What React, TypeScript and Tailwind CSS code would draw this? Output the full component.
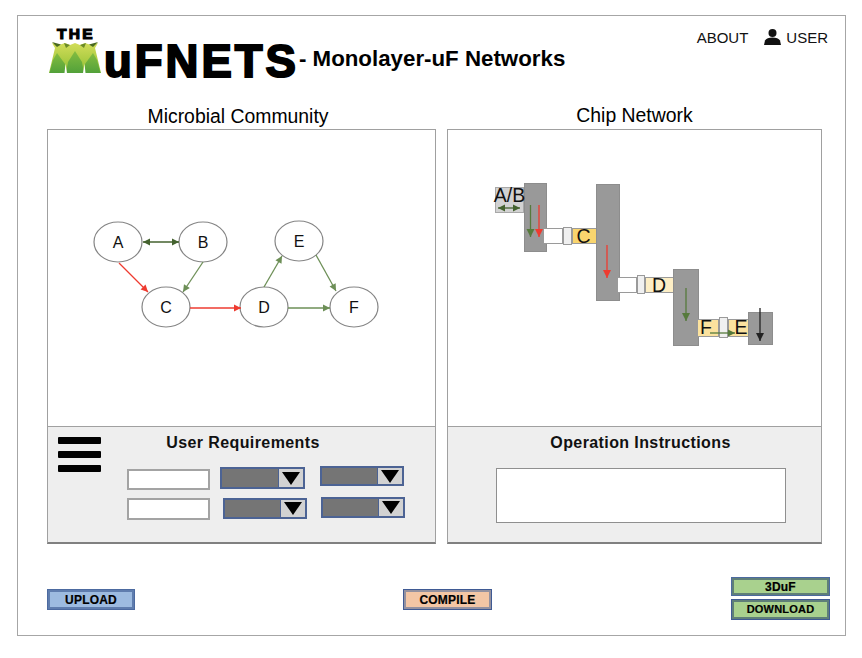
import React from "react";

function Arrow({ x1, y1, x2, y2, color, both, w = 1.3, s = 7 }: { x1: number; y1: number; x2: number; y2: number; color: string; both?: boolean; w?: number; s?: number }) {
  const a = Math.atan2(y2 - y1, x2 - x1);
  const head = (x: number, y: number, t: number) => {
    const b = s * 0.5;
    const p = [
      [x, y],
      [x - s * Math.cos(t) - b * Math.sin(t), y - s * Math.sin(t) + b * Math.cos(t)],
      [x - s * Math.cos(t) + b * Math.sin(t), y - s * Math.sin(t) - b * Math.cos(t)],
    ];
    return <polygon points={p.map((q) => q.join(",")).join(" ")} fill={color} />;
  };
  return (
    <g>
      <line x1={x1} y1={y1} x2={x2} y2={y2} stroke={color} strokeWidth={w} />
      {head(x2, y2, a)}
      {both && head(x1, y1, a + Math.PI)}
    </g>
  );
}

function Node({ cx, cy, label }: { cx: number; cy: number; label: string }) {
  return (
    <g>
      <ellipse cx={cx} cy={cy} rx={24} ry={20} fill="#fff" stroke="#858585" strokeWidth={1.2} />
      <text x={cx} y={cy + 6} textAnchor="middle" fontSize={16} fill="#111" fontFamily="Liberation Sans">{label}</text>
    </g>
  );
}

function GraphDrawing() {
  return (
    <svg className="block w-full h-full" viewBox="48 130 387 296">
      <Node cx={118} cy={242} label="A" />
      <Node cx={203} cy={242} label="B" />
      <Node cx={166} cy={307} label="C" />
      <Node cx={264} cy={307} label="D" />
      <Node cx={299} cy={241} label="E" />
      <Node cx={354} cy={307} label="F" />
      <Arrow x1={143} y1={242} x2={179} y2={242} color="#44622f" both />
      <Arrow x1={119} y1={263} x2={148} y2={292} color="#ee3b30" />
      <Arrow x1={203} y1={262} x2={183} y2={292} color="#6d8f57" />
      <Arrow x1={190} y1={308} x2={241} y2={308} color="#ee3b30" />
      <Arrow x1={264} y1={287} x2={282} y2={256} color="#6d8f57" />
      <Arrow x1={316} y1={255} x2={336} y2={291} color="#6d8f57" />
      <Arrow x1={288} y1={308} x2={330} y2={308} color="#6d8f57" />
    </svg>
  );
}

function Box({ x, y, w, h, fill, stroke = "#9a9a9a", sw = 1 }: { x: number; y: number; w: number; h: number; fill: string; stroke?: string; sw?: number }) {
  return <rect x={x + 0.5} y={y + 0.5} width={w - 1} height={h - 1} fill={fill} stroke={stroke} strokeWidth={sw} />;
}

function Lbl({ x, y, t, size = 19.5 }: { x: number; y: number; t: string; size?: number }) {
  return <text x={x} y={y} textAnchor="middle" fontSize={size} fill="#111" fontFamily="Liberation Sans">{t}</text>;
}

function ChipDrawing() {
  return (
    <svg className="block w-full h-full" viewBox="448 130 373 296">
      <Box x={495} y={187} w={29} h={26} fill="#d2d2d2" stroke="#a8a8a8" />
      <Box x={524} y={183} w={23} h={69} fill="#999999" stroke="#8d8d8d" />
      <Box x={543} y={228} w={20} h={16} fill="#ffffff" />
      <Box x={572} y={228} w={27} h={16} fill="#f9d56e" />
      <Box x={563} y={227} w={9} h={18} fill="#f0f0f0" />
      <Box x={596} y={184} w={24} h={117} fill="#999999" stroke="#8d8d8d" />
      <Box x={617} y={277} w={20} h={16} fill="#ffffff" />
      <Box x={645} y={277} w={31} h={16} fill="#fdeec5" />
      <Box x={637} y={275} w={8} h={19} fill="#f0f0f0" />
      <Box x={673} y={269} w={26} h={77} fill="#999999" stroke="#8d8d8d" />
      <Box x={697} y={319} w={22} h={18} fill="#fbe29e" />
      <Box x={728} y={319} w={21} h={18} fill="#fbe29e" />
      <Box x={719} y={317} w={9} h={21} fill="#f0f0f0" />
      <Box x={748} y={312} w={25} h={33} fill="#999999" stroke="#8d8d8d" />
      <Lbl x={509.5} y={202} t="A/B" />
      <Lbl x={583.5} y={243} t="C" />
      <Lbl x={659} y={292} t="D" />
      <Lbl x={706} y={334} t="F" />
      <Lbl x={741} y={334} t="E" />
      <Arrow x1={498} y1={208} x2={520} y2={208} color="#44622f" both s={7} />
      <Arrow x1={530.5} y1={205} x2={530.5} y2={237} color="#567a3c" s={8} />
      <Arrow x1={539} y1={205} x2={539} y2={237} color="#ee3b30" s={8} />
      <Arrow x1={607} y1={245} x2={607} y2={278} color="#ee3b30" s={8} />
      <Arrow x1={686} y1={288} x2={686} y2={321} color="#567a3c" s={8} />
      <Arrow x1={710} y1={333} x2={735} y2={333} color="#567a3c" s={7} />
      <Arrow x1={760} y1={308} x2={760} y2={341} color="#222222" s={8} />
    </svg>
  );
}

function LogoMark() {
  return (
    <svg width="52" height="32" viewBox="0 0 52 32" className="block">
      <defs>
        <linearGradient id="top" x1="0" y1="0" x2="0" y2="1">
          <stop offset="0" stopColor="#d2dd5a" />
          <stop offset="0.6" stopColor="#aacb42" />
          <stop offset="1" stopColor="#8fc13c" />
        </linearGradient>
        <linearGradient id="leg" x1="0" y1="0" x2="0" y2="1">
          <stop offset="0" stopColor="#84bd40" />
          <stop offset="1" stopColor="#52a13a" />
        </linearGradient>
      </defs>
      <polygon points="3,1 10,3 16,1 21,3 26,1 31,3 36,1 42,3 49,1 46,6 52,31 0,31 6,6" fill="url(#top)" />
      <polygon points="8,11 16,22 16,31 0.5,31 4,18" fill="url(#leg)" />
      <polygon points="26,9 33,20 35,31 17,31 19,20" fill="url(#leg)" />
      <polygon points="44,11 48,18 51.5,31 36,31 36,22" fill="url(#leg)" />
      <polygon points="15.5,31 16.5,22 18,31" fill="#ffffff" />
      <polygon points="34,31 35.5,22 36.5,31" fill="#ffffff" />
      <polygon points="3,0 12,2.5 8,5" fill="#4a6a20" />
      <polygon points="49,0 40,2.5 44,5" fill="#4a6a20" />
      <polygon points="15,1 21,3 17,6" fill="#6a8a28" />
      <polygon points="37,1 31,3 35,6" fill="#6a8a28" />
    </svg>
  );
}

function Select({ className }: { className: string }) {
  return (
    <div className={`flex border-2 border-[#4c6394] ${className}`}>
      <div className="flex-1 bg-[#757575] border-r border-[#4c6394]" />
      <div className="w-[24px] bg-[#d2d2d2] flex items-center justify-center">
        <svg width="18" height="13" viewBox="0 0 18 13"><polygon points="0,0 18,0 9,13" fill="#000" /></svg>
      </div>
    </div>
  );
}

function Btn({ label, className }: { label: string; className: string }) {
  return (
    <button className={`block font-bold text-black border-[3px] outline outline-1 -outline-offset-1 tracking-[0.2px] leading-none [-webkit-text-stroke:0.2px_black] ${className}`}>
      {label}
    </button>
  );
}

export default function App() {
  return (
    <div className="w-[862px] h-[658px] bg-white pt-[15px] pl-[17px] font-['Liberation_Sans',sans-serif] text-black overflow-hidden">
      <div className="w-[829px] h-[621px] border border-[#a6a6a6] flex flex-col">
        <header className="h-[88px] flex items-start">
          <div className="ml-[31px] mt-[10px] w-[52px] flex flex-col items-center">
            <div className="text-[15.5px] leading-[16px] font-bold tracking-[2.4px] pl-[2px] whitespace-nowrap [-webkit-text-stroke:1.2px_black]">THE</div>
            <LogoMark />
          </div>
          <div className="ml-[3px] mt-[21px] text-[45.5px] leading-[50px] font-bold tracking-[3px] [-webkit-text-stroke:2px_black]">uFNETS</div>
          <div className="ml-0 mt-[30px] text-[22.3px] leading-[26px] font-bold whitespace-nowrap">- Monolayer-uF Networks</div>
          <nav className="ml-auto mr-[17px] mt-[10px] flex items-center text-[15px] leading-[24px] text-[#111]">
            <span>ABOUT</span>
            <svg className="ml-[16px] mr-[5px] mb-[3px]" width="17" height="16" viewBox="0 0 17 16">
              <circle cx="8.5" cy="4" r="4" fill="#111" />
              <path d="M0 16 L1 11.5 C2 9.5 5 8.5 8.5 8.5 C12 8.5 15 9.5 16 11.5 L17 16 Z" fill="#111" />
            </svg>
            <span>USER</span>
          </nav>
        </header>

        <main className="ml-[29px] flex gap-[11px]">
          <section className="w-[389px]">
            <h2 className="h-[25px] pr-[7px] text-center text-[19.4px] leading-[24px] font-normal">Microbial Community</h2>
            <div className="h-[415px] border border-[#a0a0a0] border-b-2 border-b-[#808080] flex flex-col">
              <div className="h-[296px]"><GraphDrawing /></div>
              <div className="flex-1 bg-[#eeeeee] border-t border-[#a0a0a0] flex pl-[10px] pt-[10px]">
                <div className="w-[43px] flex flex-col gap-[7px]">
                  <div className="h-[7px] bg-black rounded-[1px]" />
                  <div className="h-[7px] bg-black rounded-[1px]" />
                  <div className="h-[7px] bg-black rounded-[1px]" />
                </div>
                <div className="ml-[26px]">
                  <h3 className="w-[232px] text-center text-[16px] leading-[14px] font-bold text-[#111] tracking-[0.4px] mt-[-1px]">User Requirements</h3>
                  <div className="flex mt-[16px]">
                    <div className="w-[83px] flex flex-col gap-[8px] pt-[3px]">
                      <div className="h-[21px] bg-white border-2 border-[#a3a3a3]" />
                      <div className="h-[22px] bg-white border-2 border-[#a3a3a3]" />
                    </div>
                    <div className="w-[97px] flex flex-col gap-[9px] pt-[1px]">
                      <Select className="ml-[10px] w-[85px] h-[22px]" />
                      <Select className="ml-[13px] w-[84px] h-[21px]" />
                    </div>
                    <div className="flex flex-col gap-[11px]">
                      <Select className="ml-[13px] w-[84px] h-[20px]" />
                      <Select className="ml-[14px] w-[84px] h-[21px]" />
                    </div>
                  </div>
                </div>
              </div>
            </div>
          </section>
          <section className="w-[375px]">
            <h2 className="h-[25px] text-center text-[19.4px] leading-[22px] font-normal">Chip Network</h2>
            <div className="h-[415px] border border-[#a0a0a0] border-b-2 border-b-[#808080] flex flex-col">
              <div className="h-[296px]"><ChipDrawing /></div>
              <div className="flex-1 bg-[#eeeeee] border-t border-[#a0a0a0] pt-[9px] flex flex-col">
                <h3 className="text-center text-[16px] leading-[14px] font-bold text-[#111] tracking-[0.4px] pl-[12px]">Operation Instructions</h3>
                <div className="ml-[48px] mt-[18px] w-[290px] h-[55px] bg-white border border-[#8f8f8f]" />
              </div>
            </div>
          </section>
        </main>

        <footer className="ml-[29px] mr-[15px] flex-1 flex items-center pt-[20px]">
          <Btn label="UPLOAD" className="text-[12px] w-[88px] h-[21px] bg-[#9dbbe0] border-[#5f7dae] outline-[#4c6aa0]" />
          <Btn label="COMPILE" className="text-[12px] ml-[268px] w-[89px] h-[21px] bg-[#f3c6a5] border-[#94919f] outline-[#3f5a94]" />
          <div className="ml-auto flex flex-col gap-[3px] mt-[-2px]">
            <Btn label="3DuF" className="text-[12px] w-[99px] h-[19px] bg-[#a9d18e] border-[#5f7f78] outline-[#4c6aa0]" />
            <Btn label="DOWNLOAD" className="text-[11px] w-[99px] h-[21px] bg-[#a9d18e] border-[#5f7f78] outline-[#3f5a94]" />
          </div>
        </footer>
      </div>
    </div>
  );
}
